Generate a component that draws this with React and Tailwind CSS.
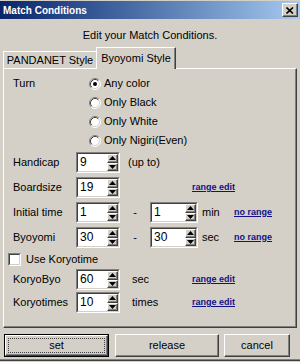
import React, { useState } from 'react';

const raised =
  'border border-t-white border-l-white border-r-[#404040] border-b-[#404040] shadow-[inset_-1px_-1px_0_#808080]';

const Radio = ({ checked }) => (
  <svg width="12" height="12" viewBox="0 0 12 12" className="shrink-0">
    <circle cx="6" cy="6" r="5" fill="#fff" />
    <path d="M2.11 9.89 A5.5 5.5 0 0 1 9.89 2.11" fill="none" stroke="#808080" />
    <path d="M2.82 9.18 A4.5 4.5 0 0 1 9.18 2.82" fill="none" stroke="#404040" />
    <path d="M9.89 2.11 A5.5 5.5 0 0 1 2.11 9.89" fill="none" stroke="#fff" />
    <path d="M9.18 2.82 A4.5 4.5 0 0 1 2.82 9.18" fill="none" stroke="#d4d0c8" />
    {checked && <circle cx="6" cy="6" r="2" fill="#000" />}
  </svg>
);

const Arrow = ({ up }) => (
  <svg width="7" height="4" viewBox="0 0 7 4">
    <polygon points={up ? '3.5,0 7,4 0,4' : '0,0 7,0 3.5,4'} fill="#000" />
  </svg>
);

const Spinner = ({ value, width = 'w-[44px]' }) => (
  <div className={`${width} h-[21px] shrink-0 border border-t-[#808080] border-l-[#808080] border-r-white border-b-white`}>
    <div className="h-full flex bg-white border border-t-[#404040] border-l-[#404040] border-r-[#d4d0c8] border-b-[#d4d0c8]">
      <div className="flex-1 pl-[2px] text-[12px] leading-[17px] text-black">{value}</div>
      <div className="w-[11px] flex flex-col">
        <div className={`flex-1 bg-[#d4d0c8] flex items-center justify-center ${raised}`}>
          <Arrow up />
        </div>
        <div className={`flex-1 bg-[#d4d0c8] flex items-center justify-center ${raised}`}>
          <Arrow />
        </div>
      </div>
    </div>
  </div>
);

const Link = ({ children, className = '' }) => (
  <span className={`text-[9px] font-bold underline text-[#10108a] whitespace-nowrap ${className}`}>{children}</span>
);

const Label = ({ children, className = 'w-[63px]' }) => (
  <div className={`${className} shrink-0 whitespace-nowrap`}>{children}</div>
);

const turnOptions = ['Any color', 'Only Black', 'Only White', 'Only Nigiri(Even)'];

export default function App() {
  const [turn] = useState(0);

  return (
    <div className="w-[300px] h-[362px] bg-[#d4d0c8] flex flex-col text-[11px] text-black font-['Liberation_Sans',Arial,sans-serif] overflow-hidden">
      {/* title bar */}
      <div className="mt-[1px] h-[18px] flex items-center justify-between pl-[3px] pr-[2px] bg-linear-to-r from-[#0a246a] to-[#a6caf0]">
        <span className="text-white font-bold text-[10px]">Match Conditions</span>
        <div className={`w-[16px] h-[14px] bg-[#d4d0c8] flex items-center justify-center ${raised}`}>
          <svg width="8" height="7" viewBox="0 0 8 7">
            <path d="M0.5 0.5 L7 6.5 M7 0.5 L0.5 6.5" stroke="#000" strokeWidth="1.6" />
          </svg>
        </div>
      </div>

      <div className="h-[28px] pt-[9px] leading-[14px] text-center">Edit your Match Conditions.</div>

      {/* tabs */}
      <div className="h-[21px] flex items-end px-[3px]">
        <div className="w-[93px] h-[17px] flex items-center justify-center whitespace-nowrap border-t border-l border-t-white border-l-white">
          PANDANET Style
        </div>
        <div className="relative z-10 w-[80px] h-[22px] -mb-[1px] bg-[#d4d0c8] flex items-center justify-center pb-[1px] whitespace-nowrap border-t border-l border-r border-t-white border-l-white border-r-[#404040] shadow-[inset_-1px_0_0_#808080]">
          Byoyomi Style
        </div>
      </div>

      {/* panel */}
      <div className={`mx-[3px] h-[260px] flex flex-col pt-[5px] ${raised}`}>
        <div className="flex pl-[9px]">
          <Label className="w-[76px] leading-[19px]">Turn</Label>
          <div className="flex flex-col">
            {turnOptions.map((opt, i) => (
              <div key={opt} className="h-[19px] flex items-center gap-[3px]">
                <Radio checked={turn === i} />
                <span>{opt}</span>
              </div>
            ))}
          </div>
        </div>

        <div className="mt-[2px] flex flex-col gap-[4px] pl-[9px]">
          <div className="flex items-center">
            <Label>Handicap</Label>
            <Spinner value="9" />
            <span className="ml-[8px]">(up to)</span>
          </div>
          <div className="flex items-center">
            <Label>Boardsize</Label>
            <Spinner value="19" />
            <Link className="ml-[72px]">range edit</Link>
          </div>
          <div className="flex items-center">
            <Label>Initial time</Label>
            <Spinner value="1" />
            <span className="w-[30px] text-center">-</span>
            <Spinner value="1" width="w-[48px]" />
            <span className="w-[36px] pl-[4px]">min</span>
            <Link>no range</Link>
          </div>
          <div className="flex items-center">
            <Label>Byoyomi</Label>
            <Spinner value="30" />
            <span className="w-[30px] text-center">-</span>
            <Spinner value="30" width="w-[48px]" />
            <span className="w-[36px] pl-[4px]">sec</span>
            <Link>no range</Link>
          </div>
        </div>

        <div className="mt-[2px] h-[19px] flex items-center gap-[5px] pl-[4px]">
          <div className="w-[13px] h-[13px] border border-t-[#808080] border-l-[#808080] border-r-white border-b-white">
            <div className="h-full bg-white border border-t-[#404040] border-l-[#404040] border-r-[#d4d0c8] border-b-[#d4d0c8]" />
          </div>
          <span>Use Koryotime</span>
        </div>

        <div className="flex flex-col gap-[2px] pl-[9px]">
          <div className="flex items-center">
            <Label>KoryoByo</Label>
            <Spinner value="60" />
            <span className="w-[60px] pl-[12px]">sec</span>
            <Link className="ml-[12px]">range edit</Link>
          </div>
          <div className="flex items-center">
            <Label>Koryotimes</Label>
            <Spinner value="10" />
            <span className="w-[60px] pl-[12px]">times</span>
            <Link className="ml-[12px]">range edit</Link>
          </div>
        </div>
      </div>

      {/* buttons */}
      <div className="mt-[6px] flex pl-[4px] gap-[6px]">
        <div className="w-[105px] h-[23px] border border-black">
          <div className={`h-full bg-[#d4d0c8] p-[2px] ${raised}`}>
            <div className="h-full border border-dotted border-[#404040] flex items-center justify-center">set</div>
          </div>
        </div>
        <div className={`w-[104px] h-[23px] flex items-center justify-center ${raised}`}>release</div>
        <div className={`ml-[-1px] w-[66px] h-[23px] flex items-center justify-center ${raised}`}>cancel</div>
      </div>
      <div className="mt-[2px] h-[1px] bg-[#808080]" />
      <div className="h-[1px] bg-[#404040]" />
    </div>
  );
}
